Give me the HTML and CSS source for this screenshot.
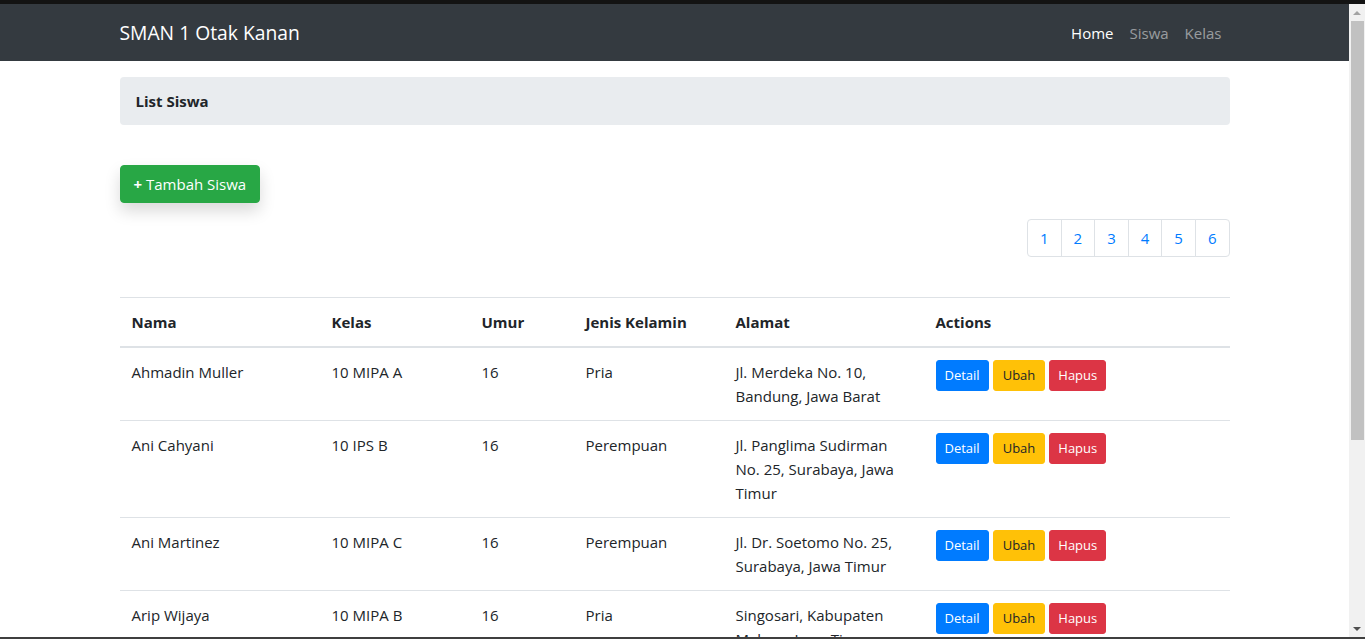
FILE: index.html
```html
<!DOCTYPE html>
<html lang="id">
<head>
<meta charset="utf-8">
<title>SMAN 1 Otak Kanan</title>
<link rel="stylesheet" href="styles.css">
</head>
<body>
<div class="frame-top"></div>
<div class="window">
  <div class="page">
    <nav class="navbar">
      <div class="container nav-inner">
        <a class="brand" href="#">SMAN 1 Otak Kanan</a>
        <ul class="nav">
          <li><a class="nav-link active" href="#">Home</a></li>
          <li><a class="nav-link" href="#">Siswa</a></li>
          <li><a class="nav-link" href="#">Kelas</a></li>
        </ul>
      </div>
    </nav>
    <main class="container">
      <div class="title-box">List Siswa</div>
      <div class="actions-top">
        <a class="btn btn-success btn-shadow" href="#"><span class="plus">+</span> Tambah Siswa</a>
      </div>
      <div class="pager-row">
        <ul class="pagination">
          <li><a class="page-link" href="#">1</a></li>
          <li><a class="page-link" href="#">2</a></li>
          <li><a class="page-link" href="#">3</a></li>
          <li><a class="page-link" href="#">4</a></li>
          <li><a class="page-link" href="#">5</a></li>
          <li><a class="page-link" href="#">6</a></li>
        </ul>
      </div>
      <table class="table">
        <colgroup>
          <col class="c-nama"><col class="c-kelas"><col class="c-umur"><col class="c-jk"><col class="c-alamat"><col class="c-act">
        </colgroup>
        <thead>
          <tr><th>Nama</th><th>Kelas</th><th>Umur</th><th>Jenis Kelamin</th><th>Alamat</th><th>Actions</th></tr>
        </thead>
        <tbody>
          <tr>
            <td>Ahmadin Muller</td><td>10 MIPA A</td><td>16</td><td>Pria</td>
            <td>Jl. Merdeka No. 10, Bandung, Jawa Barat</td>
            <td><div class="row-btns"><a class="btn btn-sm btn-primary" href="#">Detail</a><a class="btn btn-sm btn-warning" href="#">Ubah</a><a class="btn btn-sm btn-danger" href="#">Hapus</a></div></td>
          </tr>
          <tr>
            <td>Ani Cahyani</td><td>10 IPS B</td><td>16</td><td>Perempuan</td>
            <td>Jl. Panglima Sudirman No. 25, Surabaya, Jawa Timur</td>
            <td><div class="row-btns"><a class="btn btn-sm btn-primary" href="#">Detail</a><a class="btn btn-sm btn-warning" href="#">Ubah</a><a class="btn btn-sm btn-danger" href="#">Hapus</a></div></td>
          </tr>
          <tr>
            <td>Ani Martinez</td><td>10 MIPA C</td><td>16</td><td>Perempuan</td>
            <td>Jl. Dr. Soetomo No. 25, Surabaya, Jawa Timur</td>
            <td><div class="row-btns"><a class="btn btn-sm btn-primary" href="#">Detail</a><a class="btn btn-sm btn-warning" href="#">Ubah</a><a class="btn btn-sm btn-danger" href="#">Hapus</a></div></td>
          </tr>
          <tr>
            <td>Arip Wijaya</td><td>10 MIPA B</td><td>16</td><td>Pria</td>
            <td>Singosari, Kabupaten Malang, Jawa Timur</td>
            <td><div class="row-btns"><a class="btn btn-sm btn-primary" href="#">Detail</a><a class="btn btn-sm btn-warning" href="#">Ubah</a><a class="btn btn-sm btn-danger" href="#">Hapus</a></div></td>
          </tr>
        </tbody>
      </table>
    </main>
  </div>
  <div class="scrollbar">
    <div class="sb-arrow sb-up"></div>
    <div class="sb-thumb"></div>
    <div class="sb-rest"></div>
    <div class="sb-arrow sb-down"></div>
  </div>
</div>
<div class="frame-bottom"></div>
</body>
</html>
```

FILE: styles.css
```css
* { box-sizing: border-box; }
html, body { margin: 0; padding: 0; }
body {
  height: 639px;
  overflow: hidden;
  display: flex;
  flex-direction: column;
  font-family: "Open Sans", "Noto Sans", sans-serif;
  font-size: 15px;
  line-height: 24px;
  color: #212529;
  background: #fff;
}
a { text-decoration: none; }

.frame-top { height: 4px; background: #131313; flex: none; }
.frame-bottom { height: 2px; background: #3f3f3f; flex: none; }

.window { flex: 1; display: flex; min-height: 0; }
.page { flex: 1; overflow: hidden; min-width: 0; }

.scrollbar {
  width: 16px;
  flex: none;
  background: #f1f1f1;
  display: flex;
  flex-direction: column;
  align-items: center;
}
.sb-arrow { height: 17px; width: 16px; display: flex; align-items: center; justify-content: center; flex: none; }
.sb-up::before {
  content: "";
  border-left: 4px solid transparent;
  border-right: 4px solid transparent;
  border-bottom: 4px solid #a3a3a3;
}
.sb-down::before {
  content: "";
  border-left: 4px solid transparent;
  border-right: 4px solid transparent;
  border-top: 4px solid #505050;
}
.sb-thumb { width: 13px; margin-left: 1px; height: 419px; background: #c1c1c1; flex: none; }
.sb-rest { flex: 1; }

.container { max-width: 1140px; margin: 0 auto; padding: 0 15px; }

.navbar { background: #343a40; height: 57px; }
.nav-inner { height: 100%; display: flex; align-items: center; justify-content: space-between; }
.brand { color: #fff; font-size: 19.3px; line-height: 30px; }
.nav { list-style: none; margin: 0; padding: 0; display: flex; }
.nav-link { display: block; padding: 8px 8px; color: rgba(255,255,255,.5); }
.nav-link.active { color: #fff; }

.title-box {
  margin-top: 16px;
  background: #e9ecef;
  border-radius: 4px;
  padding: 12px 16px;
  font-weight: 700;
}

.actions-top { margin-top: 40px; }
.btn {
  display: inline-block;
  border: 1px solid transparent;
  border-radius: 4px;
  padding: 6px 12px;
  line-height: 24px;
  font-size: 15px;
  color: #fff;
}
.btn-success { background: #28a745; border-color: #28a745; padding: 6px 13px; }
.btn-shadow { box-shadow: 0 8px 16px rgba(0,0,0,.15); }
.plus { font-weight: 700; }

.pager-row { margin-top: 16px; display: flex; justify-content: flex-end; }
.pagination { list-style: none; margin: 0; padding: 0; display: flex; }
.page-link {
  display: block;
  padding: 8px 12px;
  line-height: 20px;
  color: #007bff;
  background: #fff;
  border: 1px solid #dee2e6;
  margin-left: -1px;
  font-size: 15px;
}
.pagination li:first-child .page-link { margin-left: 0; border-radius: 4px 0 0 4px; }
.pagination li:last-child .page-link { border-radius: 0 4px 4px 0; }

.table { margin-top: 40px; width: 100%; border-collapse: collapse; table-layout: fixed; }
.c-nama { width: 200px; }
.c-kelas { width: 150px; }
.c-umur { width: 104px; }
.c-jk { width: 150px; }
.c-alamat { width: 200px; }
.table th, .table td {
  padding: 12px;
  text-align: left;
  vertical-align: top;
  border-top: 1px solid #dee2e6;
}
.table thead th { vertical-align: bottom; border-bottom: 2px solid #dee2e6; font-weight: 700; }

.row-btns { display: flex; gap: 4.5px; }
.btn-sm { font-size: 13px; line-height: 21px; padding: 4px 8px; border-radius: 3px; }
.btn-warning { padding: 4px 8.5px; }
.btn-primary { background: #007bff; border-color: #007bff; }
.btn-warning { background: #ffc107; border-color: #ffc107; color: #212529; }
.btn-danger { background: #dc3545; border-color: #dc3545; }
```
